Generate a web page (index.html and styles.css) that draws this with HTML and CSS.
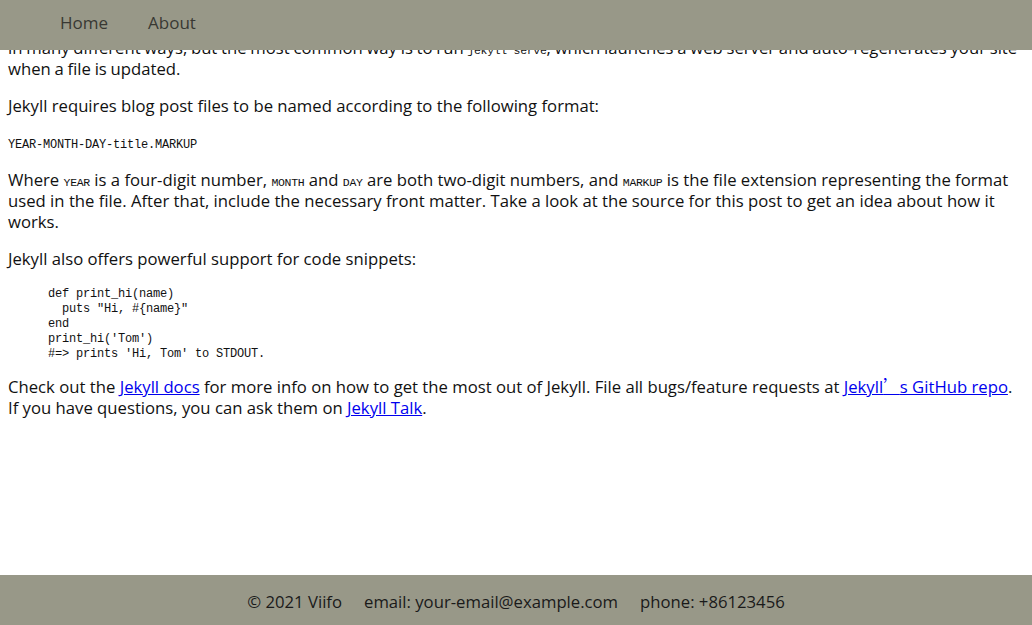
FILE: index.html
```html
<!DOCTYPE html>
<html lang="en">
<head>
<meta charset="utf-8">
<title>Welcome to Jekyll</title>
<link rel="stylesheet" href="styles.css">
</head>
<body>
<header class="site-header">
  <nav class="nav">
    <a class="nav-link" href="#">Home</a>
    <a class="nav-link" href="#">About</a>
  </nav>
</header>

<main class="post">
  <p class="para para-tight">in many different ways, but the most common way is to run <code class="inline-code">jekyll serve</code>, which launches a web server and auto-regenerates your site when a file is updated.</p>

  <p class="para">Jekyll requires blog post files to be named according to the following format:</p>

  <pre class="code-line">YEAR-MONTH-DAY-title.MARKUP</pre>

  <p class="para">Where <code class="inline-code">YEAR</code> is a four-digit number, <code class="inline-code">MONTH</code> and <code class="inline-code">DAY</code> are both two-digit numbers, and <code class="inline-code">MARKUP</code> is the file extension representing the format used in the file. After that, include the necessary front matter. Take a look at the source for this post to get an idea about how it works.</p>

  <p class="para">Jekyll also offers powerful support for code snippets:</p>

  <pre class="code-block">def print_hi(name)
  puts "Hi, #{name}"
end
print_hi('Tom')
#=&gt; prints 'Hi, Tom' to STDOUT.</pre>

  <p class="para">Check out the <a class="link" href="#">Jekyll docs</a> for more info on how to get the most out of Jekyll. File all bugs/feature requests at <a class="link" href="#">Jekyll<span class="cjk">’</span>s GitHub repo</a>. If you have questions, you can ask them on <a class="link" href="#">Jekyll Talk</a>.</p>
</main>

<footer class="site-footer">
  <span class="foot-item">© 2021 Viifo</span>
  <span class="foot-item">email: your-email@example.com</span>
  <span class="foot-item">phone: +86123456</span>
</footer>
</body>
</html>
```

FILE: styles.css
```css
html, body {
  margin: 0;
  padding: 0;
  background: #ffffff;
}

body {
  font-family: "Open Sans", "Noto Sans CJK SC", sans-serif;
  font-size: 16.7px;
  line-height: 21px;
  color: #111111;
}

.site-header {
  position: fixed;
  top: 0;
  left: 0;
  right: 0;
  height: 50px;
  background: #989888;
  z-index: 10;
}

.nav {
  display: flex;
  align-items: center;
  height: 44px;
  padding-left: 60px;
  gap: 40px;
}

.nav-link {
  color: #383833;
  text-decoration: none;
  font-size: 17px;
}

.post {
  padding: 37px 8px 0 8px;
}

.para {
  margin: 0 0 16px 0;
}

.para-tight {
  word-spacing: -0.6px;
}

.inline-code {
  font-family: "Liberation Mono", "DejaVu Sans Mono", monospace;
  font-size: 11.5px;
  line-height: 14px;
  letter-spacing: -0.3px;
  word-spacing: 0;
}

.code-line {
  margin: 22px 0 16px 0;
  font-family: "Liberation Mono", "DejaVu Sans Mono", monospace;
  font-size: 12px;
  letter-spacing: -0.2px;
  line-height: 15px;
}

.code-block {
  margin: 18px 0 14px 40px;
  font-family: "Liberation Mono", "DejaVu Sans Mono", monospace;
  font-size: 12px;
  letter-spacing: -0.2px;
  line-height: 15px;
}

.link {
  color: #0000ee;
  text-decoration: underline;
}

.cjk {
  font-family: "Noto Sans CJK SC", sans-serif;
}

.site-footer {
  position: fixed;
  left: 0;
  right: 0;
  bottom: 0;
  height: 50px;
  background: #989888;
  display: flex;
  align-items: center;
  justify-content: center;
  gap: 22px;
  padding-top: 2px;
  box-sizing: border-box;
  color: #1a1a1a;
}
```
